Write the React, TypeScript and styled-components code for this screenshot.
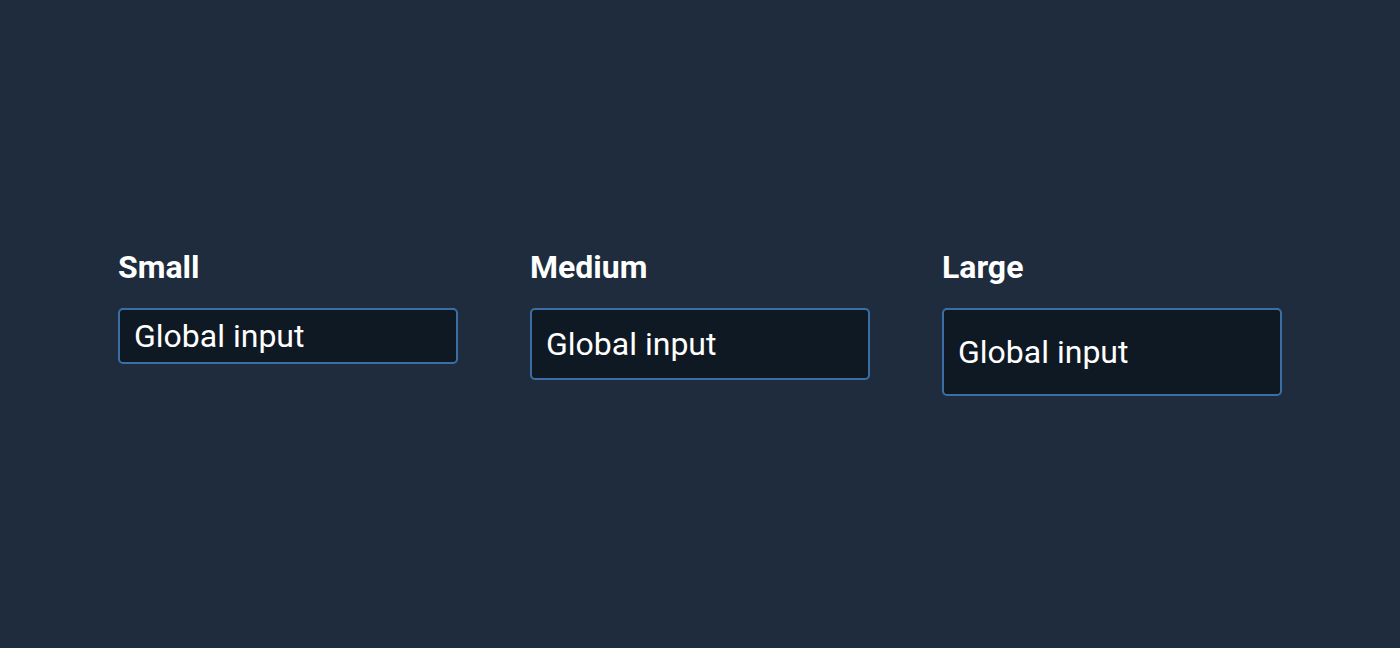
import React from "react";
import styled, { createGlobalStyle } from "styled-components";

const GlobalStyle = createGlobalStyle`
  html, body {
    margin: 0;
    padding: 0;
    background-color: #1e2c3d;
    font-family: Roboto, "Liberation Sans", sans-serif;
  }
`;

const sizes = [
  { label: "Small", height: 56 },
  { label: "Medium", height: 72 },
  { label: "Large", height: 88 },
];

const App = () => {
  return (
    <Page>
      <GlobalStyle />
      <Row>
        {sizes.map((s) => (
          <Field key={s.label}>
            <Label>{s.label}</Label>
            <Input $height={s.height} defaultValue="Global input" />
          </Field>
        ))}
      </Row>
    </Page>
  );
};

export default App;

const Page = styled.div`
  width: 100%;
  height: 648px;
  display: flex;
  justify-content: center;
  align-items: flex-start;
  padding-top: 247px;
  box-sizing: border-box;
`;

const Row = styled.div`
  display: flex;
  align-items: flex-start;
  gap: 72px;
`;

const Field = styled.div`
  display: flex;
  flex-direction: column;
  width: 340px;
  gap: 21px;
`;

const Label = styled.div`
  color: #ffffff;
  font-weight: bold;
  font-size: 32px;
  line-height: 40px;
`;

const Input = styled.input<{ $height: number }>`
  box-sizing: border-box;
  width: 340px;
  height: ${(p) => p.$height}px;
  padding: 0 14px;
  background-color: #0f1923;
  border: 2px solid #3a6ea5;
  border-radius: 5px;
  color: #ffffff;
  font-family: Roboto, "Liberation Sans", sans-serif;
  font-size: 32px;
  outline: none;
`;
